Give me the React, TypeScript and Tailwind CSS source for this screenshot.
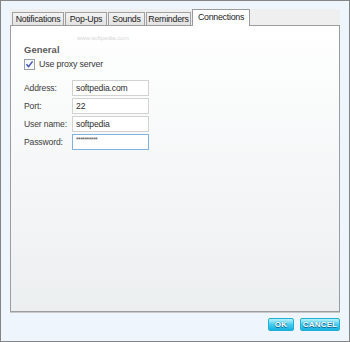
import React from "react";

const font = { fontFamily: '"Liberation Sans", Arial, sans-serif' };

const tabs = [
  { label: "Notifications", w: "w-[52px]" },
  { label: "Pop-Ups", w: "w-[42px]" },
  { label: "Sounds", w: "w-[37px]" },
  { label: "Reminders", w: "w-[45px]" },
];

function Field({ label, value, focused, password }: { label: string; value: string; focused?: boolean; password?: boolean }) {
  return (
    <div className="flex items-center h-[16px]">
      <div className="w-[48px] text-[8.6px] tracking-[-0.15px] text-[#404040] leading-none">{label}</div>
      <div
        className={
          "w-[77px] h-[16px] bg-white flex items-center pl-[3px] border " +
          (focused ? "border-[#7fb2e0]" : "border-[#d2d2d2]")
        }
      >
        {password ? (
          <span className="text-[7px] text-[#555] leading-none -mt-[6px] tracking-[-0.6px]">**********</span>
        ) : (
          <span className="text-[8.6px] tracking-[-0.15px] text-[#2e2e2e] leading-none">{value}</span>
        )}
      </div>
    </div>
  );
}

function CyanButton({ label, w }: { label: string; w: string }) {
  return (
    <div
      className={
        w +
        " h-[13px] rounded-[2px] border border-[#1fb0d8] bg-gradient-to-b from-[#b6f3fc] via-[#45cdef] to-[#12b0e0] flex items-center justify-center text-white font-bold text-[8px] leading-none tracking-[0.2px] [text-shadow:0_0_1px_#0b6f95,0_1px_0_#0b6f95]"
      }
    >
      {label}
    </div>
  );
}

export default function App() {
  return (
    <div style={font} className="w-[350px] h-[342px] border border-[#858585] bg-[#eef5fd] flex flex-col">
      <div className="pl-[9px] pt-[8px]">
        {/* tab strip */}
        <div className="w-[330px] h-[16px] bg-[#efefef] flex items-end relative z-10">
          <div className="flex items-end gap-[1px] pl-[2px]">
            {tabs.map((t) => (
              <div
                key={t.label}
                className={
                  t.w +
                  " h-[13px] border border-b-0 border-[#a0a0a0] bg-gradient-to-b from-[#f4f4f4] to-[#e2e2e2] flex items-center justify-center text-[8.8px] tracking-[-0.25px] text-[#222] leading-none"
                }
              >
                {t.label}
              </div>
            ))}
            <div className="w-[58px] h-[17px] -mb-[1px] border border-b-0 border-[#9a9a9a] bg-white flex items-start justify-center pt-[3px] text-[8.8px] tracking-[-0.25px] text-[#222] leading-none">
              Connections
            </div>
          </div>
        </div>
        {/* panel */}
        <div className="w-[330px] h-[287px] border border-[#9c9c9c] bg-gradient-to-b from-[#ffffff] to-[#eceff0] shadow-[0_1px_0_#c9c9c9] flex flex-col pl-[13px]">
          <div className="mt-[9px] h-[6px] pl-[53px] text-[6px] leading-none text-[#d6d6d6]">www.softpedia.com</div>
          <div className="mt-[4px] h-[10px] text-[9.4px] font-bold text-[#5a5a5a] leading-none tracking-[0.1px]">General</div>
          <div className="mt-[4px] flex items-center h-[11px]">
            <svg width="11" height="11" viewBox="0 0 11 11">
              <rect x="0.5" y="0.5" width="10" height="10" fill="#f8f8f8" stroke="#98a0a8" />
              <path d="M2.5 5.2 L4.5 7.6 L8.6 2.4" fill="none" stroke="#3c4fb5" strokeWidth="1.4" />
            </svg>
            <span className="ml-[4px] text-[8.8px] tracking-[-0.15px] text-[#383838] leading-none">Use proxy server</span>
          </div>
          <div className="mt-[10px] flex flex-col gap-[2px]">
            <Field label="Address:" value="softpedia.com" />
            <Field label="Port:" value="22" />
            <Field label="User name:" value="softpedia" />
            <Field label="Password:" value="" focused password />
          </div>
        </div>
      </div>
      <div className="flex justify-end gap-[6px] pr-[9px] mt-[6px]">
        <CyanButton label="OK" w="w-[26px]" />
        <CyanButton label="CANCEL" w="w-[40px]" />
      </div>
    </div>
  );
}
